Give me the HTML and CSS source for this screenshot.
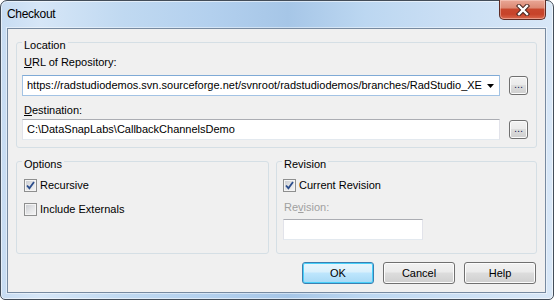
FILE: index.html
```html
<!DOCTYPE html>
<html lang="en">
<head>
<meta charset="UTF-8">
<meta name="viewport" content="width=device-width, initial-scale=1.0">
<title>Checkout</title>
<link rel="stylesheet" href="styles.css">
</head>
<body>

<div class="window">
    <div class="titlebar">
        <span class="title">Checkout</span>
        <span class="close-btn">
            <svg width="14" height="12" viewBox="0 0 14 12">
                <path d="M3 2 L11 10 M11 2 L3 10" stroke="#47241f" stroke-width="4.4" stroke-linecap="square" fill="none"/>
                <path d="M3 2 L11 10 M11 2 L3 10" stroke="#fff" stroke-width="2.4" stroke-linecap="square" fill="none"/>
            </svg>
        </span>
    </div>

    <div class="client">
        <!-- Location -->
        <fieldset class="group location">
            <legend>Location</legend>
            <div class="field-label"><u>U</u>RL of Repository:</div>
            <div class="row">
                <div class="combo">
                    <span class="combo-text">https://radstudiodemos.svn.sourceforge.net/svnroot/radstudiodemos/branches/RadStudio_XE</span>
                    <span class="combo-arrow">
                        <svg width="7" height="4" viewBox="0 0 7 4"><polygon points="0,0 7,0 3.5,4" fill="#000"/></svg>
                    </span>
                </div>
                <button class="browse">...</button>
            </div>
            <div class="field-label second"><u>D</u>estination:</div>
            <div class="row">
                <div class="edit">C:\DataSnapLabs\CallbackChannelsDemo</div>
                <button class="browse">...</button>
            </div>
        </fieldset>

        <div class="groups">
            <!-- Options -->
            <fieldset class="group options">
                <legend>Options</legend>
                <div class="check-row">
                    <span class="check">
                        <svg width="9" height="9" viewBox="0 0 9 9"><path d="M1 4.5 L3.4 7.2 L8 1" stroke="#2b4d8c" stroke-width="1.8" fill="none"/></svg>
                    </span>
                    <span>Recursive</span>
                </div>
                <div class="check-row">
                    <span class="check"></span>
                    <span>Include Externals</span>
                </div>
            </fieldset>

            <!-- Revision -->
            <fieldset class="group revision">
                <legend>Revision</legend>
                <div class="check-row">
                    <span class="check">
                        <svg width="9" height="9" viewBox="0 0 9 9"><path d="M1 4.5 L3.4 7.2 L8 1" stroke="#2b4d8c" stroke-width="1.8" fill="none"/></svg>
                    </span>
                    <span>Current Revision</span>
                </div>
                <div class="field-label disabled">Re<u>v</u>ision:</div>
                <div class="edit small"></div>
            </fieldset>
        </div>

        <div class="buttons">
            <button class="btn default">OK</button>
            <button class="btn">Cancel</button>
            <button class="btn">Help</button>
        </div>
    </div>
</div>

</body>
</html>
```

FILE: styles.css
```css
* {
    box-sizing: border-box;
}

body {
    margin: 0;
    font-family: "Liberation Sans", Arial, sans-serif;
    font-size: 11px;
    line-height: 13px;
    color: #000;
    background-color: #fff;
}

.window {
    width: 554px;
    height: 300px;
    display: flex;
    flex-direction: column;
    padding: 0 7px 6px 6px;
    border: 1px solid #434d59;
    border-radius: 7px 7px 5px 5px;
    background: linear-gradient(to right, #c7dcf2 0%, #d6e6f7 7%, #c0d9f1 22%, #b3d0ee 38%, #a6c6e7 52%, #bcd7f1 66%, #c9def4 80%, #d8e7f7 100%);
    box-shadow: inset 0 0 0 1px rgba(255, 255, 255, 0.55);
}

.titlebar {
    height: 27px;
    display: flex;
    justify-content: space-between;
    align-items: flex-start;
}

.title {
    padding-top: 6px;
    font-size: 12px;
    line-height: 15px;
    letter-spacing: -0.3px;
}

.close-btn {
    width: 47px;
    height: 20px;
    margin-top: -1px;
    display: flex;
    justify-content: center;
    align-items: center;
    border: 1px solid #5e2c25;
    border-top: none;
    border-radius: 0 0 5px 5px;
    background: linear-gradient(#e9a796 0%, #dd8a75 40%, #c8472d 50%, #c7432a 75%, #d9684d 100%);
    box-shadow: inset 0 0 0 1px rgba(255, 220, 210, 0.45);
}

.client {
    flex: 1;
    display: flex;
    flex-direction: column;
    padding: 4px 8px 8px 8px;
    border: 1px solid #778aa0;
    background-color: #f0f0f0;
    box-shadow: 0 0 0 1px rgba(255, 255, 255, 0.45);
}

.group {
    margin: 0;
    min-width: 0;
    border: 1px solid #d5dfe5;
    border-radius: 3px;
    padding: 4px 8px 7px 7px;
}

.group legend {
    padding: 6px 2px 0;
    margin-left: -2px;
    line-height: 13px;
}

.field-label {
    margin-left: 0;
    margin-bottom: 6px;
}

.field-label.second {
    margin-top: 8px;
    margin-bottom: 2px;
}

.field-label.disabled {
    color: #a0a0a0;
    margin: 9px 0 5px;
}

.row {
    display: flex;
    align-items: center;
    gap: 9px;
    margin-left: -2px;
}

.combo {
    flex: 1;
    min-width: 0;
    height: 21px;
    display: flex;
    align-items: center;
    border: 1px solid #a3c3e4;
    border-top-color: #7faad6;
    background-color: #fff;
}

.combo-text {
    flex: 1;
    min-width: 0;
    white-space: nowrap;
    padding-left: 4px;
}

.combo-arrow {
    width: 16px;
    display: flex;
    justify-content: center;
    align-items: center;
    padding-right: 2px;
}

.combo-arrow svg {
    display: block;
}

.edit {
    flex: 1;
    height: 21px;
    padding: 3px 4px 0;
    border: 1px solid #e2e3ea;
    border-top-color: #abadb3;
    border-bottom-color: #e3e9ef;
    background-color: #fff;
    white-space: nowrap;
    overflow: hidden;
}

.edit.small {
    flex: none;
    width: 140px;
    margin-left: -1px;
}

.browse {
    width: 19px;
    height: 19px;
    padding: 0 0 4px;
    border: 1px solid #707070;
    border-radius: 3px;
    background: linear-gradient(#f2f2f2 0%, #ebebeb 45%, #dddddd 50%, #cfcfcf 100%);
    box-shadow: inset 0 0 0 1px #fbfbfb;
    font-family: "Liberation Sans", Arial, sans-serif;
    font-size: 11px;
    line-height: 11px;
    color: #1a2a5a;
    display: flex;
    justify-content: center;
    align-items: flex-end;
}

.groups {
    flex: 1;
    display: flex;
    gap: 7px;
    margin-top: 4px;
}

.options {
    width: 253px;
}

.revision {
    flex: 1;
}

.options, .revision {
    padding-top: 8px;
}

.check-row {
    display: flex;
    align-items: center;
    gap: 3px;
    height: 13px;
    margin-bottom: 11px;
}

.revision .check-row {
    margin-bottom: 0;
    margin-left: -1px;
}

.check {
    width: 13px;
    height: 13px;
    display: flex;
    justify-content: center;
    align-items: center;
    border: 1px solid #8e8f8f;
    background: linear-gradient(135deg, #c6c9ce 0%, #e3e4e6 50%, #f6f6f6 100%);
    box-shadow: inset 0 0 0 1px #f4f4f4;
}

.check svg {
    display: block;
}

.buttons {
    display: flex;
    justify-content: flex-end;
    gap: 9px;
    margin-top: 8px;
    padding-right: 1px;
}

.btn {
    width: 72px;
    height: 22px;
    padding: 0;
    border: 1px solid #707070;
    border-radius: 3px;
    background: linear-gradient(#f2f2f2 0%, #ebebeb 45%, #dddddd 50%, #cfcfcf 100%);
    box-shadow: inset 0 0 0 1px #fcfcfc;
    font-family: "Liberation Sans", Arial, sans-serif;
    font-size: 11px;
    color: #000;
}

.btn.default {
    border-color: #3c7fb1;
    background: linear-gradient(#eaf6fd 0%, #d9f0fc 45%, #bee6fd 50%, #a7d9f5 100%);
    box-shadow: inset 0 0 0 1px #48d0fa;
}
```
